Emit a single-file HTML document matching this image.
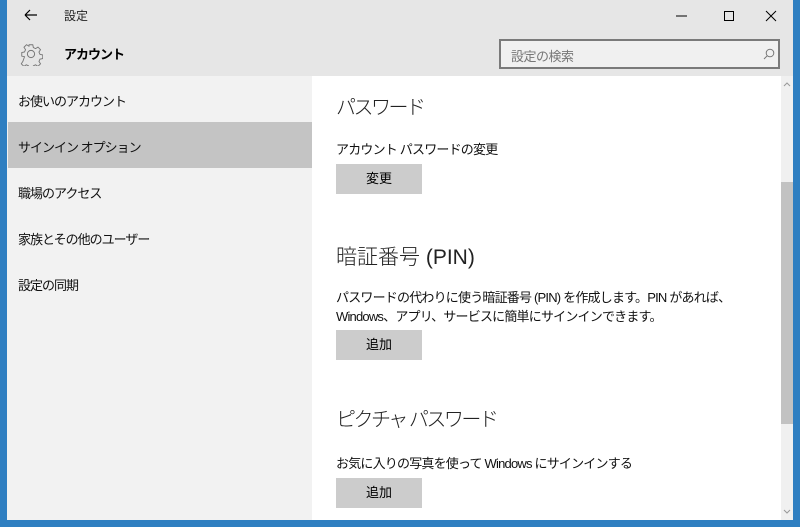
<!DOCTYPE html>
<html><head><meta charset="utf-8"><style>
*{margin:0;padding:0;box-sizing:border-box}
body{width:800px;height:527px;overflow:hidden;background:#2f7fc1;font-family:"Liberation Sans","Noto Sans CJK JP",sans-serif;color:#000;position:relative}
.win{position:absolute;left:7px;top:0;width:786px;height:520px;background:#fff}
.hdr{position:absolute;left:0;top:0;width:786px;height:76px;background:#e6e6e6}
.side{position:absolute;left:0;top:76px;width:305px;height:444px;background:#f2f2f2}
.item{position:absolute;left:11px;font-size:13px;color:#111;letter-spacing:-1px}
.sel{position:absolute;left:1px;top:46px;width:304px;height:46px;background:#c4c4c4}
.t{position:absolute;white-space:nowrap}
.h{font-size:20px;font-weight:300;color:#222;letter-spacing:-2.5px}
.p{font-size:13px;color:#111;letter-spacing:-0.8px}
.btn{position:absolute;left:329px;width:86px;height:30px;background:#cccccc;font-size:13px;text-align:center;line-height:30px}
.sb{position:absolute;left:774px;top:76px;width:12px;height:444px;background:#f0f0f0}
.th{position:absolute;left:0;top:106px;width:12px;height:242px;background:#c2c2c2}
</style></head><body>
<div class="win">
<div class="hdr">
<svg class="t" style="left:16px;top:7px" width="16" height="16"><path d="M2 8H14M2 8L7 3M2 8L7 13" stroke="#000" stroke-width="1.2" fill="none"/></svg>
<div class="t" style="left:57px;top:7px;font-size:12px;color:#222">設定</div>
<svg class="t" style="left:12px;top:42px" width="24" height="24" viewBox="0 0 24 24"><path d="M10 2h4l.6 3 2.4 1.2 2.6-1.7 2.8 2.8-1.7 2.6 1.1 2.5 3 .6v4l-3 .6-1.1 2.5 1.7 2.6-2.8 2.8-2.6-1.7-2.4 1.1-.6 3h-4l-.6-3-2.5-1.1-2.6 1.7-2.8-2.8 1.7-2.6L5 15l-3-.6v-4l3-.6 1.1-2.5L4.4 4.7 7.2 1.9l2.6 1.7L10 2z" transform="scale(.92) translate(1,1)" stroke="#777" fill="none" stroke-width="1"/><circle cx="12" cy="12" r="3.6" stroke="#777" fill="none"/></svg>
<div class="t" style="left:57px;top:44px;font-size:13px;font-weight:bold;letter-spacing:-1px">アカウント</div>
<svg class="t" style="left:669px;top:8px" width="120" height="16"><path d="M0 8H11" stroke="#000"/><path d="M48.5 3.5h9v9h-9z" stroke="#000" fill="none"/><path d="M90 3L100 13M100 3L90 13" stroke="#000"/></svg>
<div class="t" style="left:492px;top:39px;width:281px;height:30px;border:2px solid #7a7a7a;background:#f0f0f0"><span class="t" style="left:10px;top:5px;font-size:13px;color:#777;letter-spacing:-0.5px">設定の検索</span>
<svg class="t" style="left:262px;top:7px" width="12" height="12"><circle cx="7" cy="5" r="3.8" stroke="#777" fill="none"/><path d="M4.3 7.7L1 11" stroke="#777"/></svg></div>
</div>
<div class="side">
<div class="item" style="top:15px">お使いのアカウント</div>
<div class="sel"></div>
<div class="item" style="top:61px">サインイン オプション</div>
<div class="item" style="top:107px">職場のアクセス</div>
<div class="item" style="top:153px">家族とその他のユーザー</div>
<div class="item" style="top:199px">設定の同期</div>
</div>
<div class="t h" style="left:329px;top:91px">パスワード</div>
<div class="t p" style="left:329px;top:139px">アカウント パスワードの変更</div>
<div class="btn" style="top:164px">変更</div>
<div class="t h" style="left:329px;top:241px;letter-spacing:0;font-size:21px">暗証番号 (PIN)</div>
<div class="t p" style="left:329px;top:287px">パスワードの代わりに使う暗証番号 (PIN) を作成します。PIN があれば、</div>
<div class="t p" style="left:329px;top:306px">Windows、アプリ、サービスに簡単にサインインできます。</div>
<div class="btn" style="top:330px">追加</div>
<div class="t h" style="left:329px;top:403px">ピクチャ パスワード</div>
<div class="t p" style="left:329px;top:453px">お気に入りの写真を使って Windows にサインインする</div>
<div class="btn" style="top:478px">追加</div>
<div class="sb"><div class="th"></div>
<svg class="t" style="left:2px;top:5px" width="8" height="6"><path d="M1 5L4 2L7 5" stroke="#999" fill="none"/></svg>
<svg class="t" style="left:2px;top:433px" width="8" height="6"><path d="M1 1L4 4L7 1" stroke="#999" fill="none"/></svg>
</div>
</div>
</body></html>
